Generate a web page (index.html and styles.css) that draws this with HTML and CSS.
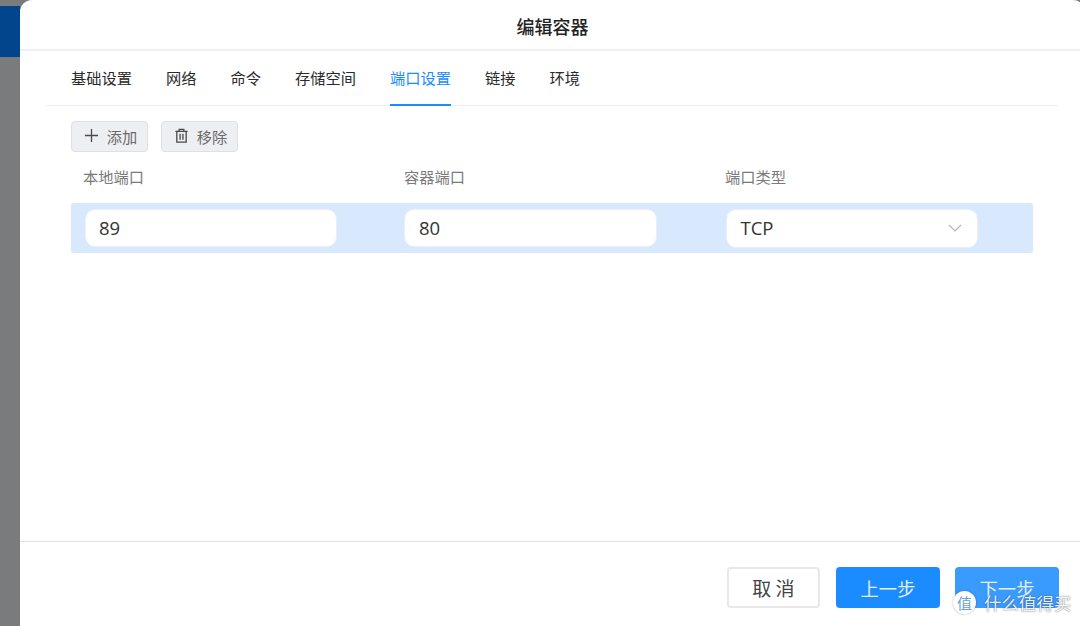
FILE: index.html
```html
<!DOCTYPE html>
<html lang="zh">
<head>
<meta charset="utf-8">
<title>编辑容器</title>
<link rel="stylesheet" href="styles.css">
</head>
<body>
<div class="page">
  <div class="backdrop"><div class="backdrop-bar"></div></div>
  <main class="dialog">
    <header class="dialog-title">编辑容器</header>
    <div class="dialog-body">
      <nav class="tabs">
        <span class="tab">基础设置</span>
        <span class="tab">网络</span>
        <span class="tab">命令</span>
        <span class="tab">存储空间</span>
        <span class="tab active">端口设置</span>
        <span class="tab">链接</span>
        <span class="tab">环境</span>
      </nav>
      <div class="toolbar">
        <button class="tool-btn">
          <svg class="icon" viewBox="0 0 16 16"><path d="M8 1v14M1 8h14"/></svg>
          <span class="tool-label">添加</span>
        </button>
        <button class="tool-btn">
          <svg class="icon" viewBox="0 0 16 16"><path d="M1.5 3.5h13M5.5 3.5V1.5h5v2M3 3.5V15h10V3.5M6.5 6v6.500M9.500 6v6.500"/></svg>
          <span class="tool-label">移除</span>
        </button>
      </div>
      <div class="grid head">
        <div class="col-label">本地端口</div>
        <div class="col-label">容器端口</div>
        <div class="col-label">端口类型</div>
      </div>
      <div class="grid row">
        <div class="field">89</div>
        <div class="field">80</div>
        <div class="field select">TCP
          <svg class="chevron" viewBox="0 0 14 8"><path d="M1 1l6 6 6-6"/></svg>
        </div>
      </div>
    </div>
    <footer class="dialog-footer">
      <button class="btn cancel">取 消</button>
      <button class="btn primary">上一步</button>
      <button class="btn primary next">下一步</button>
    </footer>
  </main>
  <div class="watermark">
    <span class="wm-badge">值</span>
    <span class="wm-text">什么值得买</span>
  </div>
</div>
</body>
</html>
```
FILE: styles.css
```css
* { box-sizing: border-box; }
html, body { margin: 0; height: 100%; overflow: hidden; }
body {
  font-family: "Noto Sans CJK SC", "Noto Sans", sans-serif;
  background: #7a7b7d;
}
.page {
  width: 1080px;
  height: 626px;
  display: flex;
  overflow: hidden;
  position: relative;
}
.backdrop {
  flex: 0 0 20px;
  padding-top: 6px;
  background: #7a7b7d;
}
.backdrop-bar {
  height: 51px;
  background: #03458c;
}
.dialog {
  flex: 0 0 1065px;
  height: 626px;
  background: #fff;
  border-radius: 12px 12px 0 0;
  display: flex;
  flex-direction: column;
}
.dialog-title {
  height: 51px;
  flex: none;
  border-bottom: 2px solid #f0f0f0;
  text-align: center;
  font-size: 18px;
  line-height: 52px;
  font-weight: 500;
  color: #222;
}
.dialog-body {
  flex: 1;
  padding: 0 26px;
}
.tabs {
  height: 55px;
  display: flex;
  gap: 34px;
  padding-left: 25px;
  border-bottom: 1px solid #f0f0f0;
}
.tab {
  height: 55px;
  line-height: 52px;
  font-size: 15.250px;
  color: #2a2a2a;
}
.tab.active {
  color: #1a8cff;
  border-bottom: 2px solid #1a8cff;
}
.toolbar {
  display: flex;
  gap: 13px;
  padding: 15px 0 0 25px;
}
.tool-btn {
  width: 77px;
  height: 31px;
  padding: 0 0 2px 2px;
  display: flex;
  align-items: center;
  justify-content: center;
  gap: 8px;
  background: #eeeff3;
  border: 1px solid #dfe0e4;
  border-radius: 4px;
  font: inherit;
  font-size: 15.250px;
  color: #6b6b6b;
}
.icon {
  width: 15px;
  height: 15px;
  fill: none;
  stroke: #4a4a4a;
  stroke-width: 1.400;
}
.tool-label { line-height: 20px; }
.grid {
  display: grid;
  width: 962px;
  margin-left: 25px;
}
.head {
  grid-template-columns: 253px 253px 252px;
  column-gap: 68px;
  height: 51px;
  padding-left: 12px;
}
.col-label {
  font-size: 15.250px;
  line-height: 48px;
  color: #7b7b7b;
}
.row {
  grid-template-columns: 252px 253px 254px;
  column-gap: 67px;
  height: 50px;
  padding: 6px 0 0 14px;
  background: #d8e9fd;
  border-radius: 3px;
}
.field {
  height: 38px;
  padding-left: 13px;
  background: #fff;
  border: 1px solid #ecf0f6;
  border-radius: 10px;
  font-family: "Open Sans", "Noto Sans", sans-serif;
  font-size: 18.500px;
  line-height: 36px;
  color: #333;
  display: flex;
  align-items: center;
  justify-content: space-between;
}
.field + .field { padding-left: 14px; }
.field.select {
  height: 39px;
  margin-left: 2px;
  padding: 0 15px 2px 13.500px;
}
.chevron {
  width: 14px;
  height: 8px;
  fill: none;
  stroke: #b5b5b5;
  stroke-width: 1.100;
}
.dialog-footer {
  height: 85px;
  flex: none;
  border-top: 1px solid #e2e2e2;
  display: flex;
  justify-content: flex-end;
  gap: 15px;
  padding: 25px 26px 0 0;
}
.btn {
  height: 41px;
  width: 104px;
  padding: 0;
  border: 0;
  border-radius: 4px;
  font: inherit;
  font-size: 18.300px;
  color: #fff;
}
.cancel {
  width: 93px;
  margin-right: 1px;
  background: #fff;
  border: 2px solid #e8e8e8;
  color: #444;
  font-size: 19px;
}
.primary {
  background: #1a8cff;
  color: #e4eefa;
}
.next { background: #3a9bff; }
.watermark {
  position: absolute;
  left: 953px;
  top: 591px;
  display: flex;
  align-items: center;
  gap: 8px;
  color: rgba(255, 255, 255, 0.920);
}
.wm-badge {
  width: 23px;
  height: 23px;
  border-radius: 50%;
  background: #fff;
  color: #6d9fd0;
  font-size: 15px;
  line-height: 23px;
  text-align: center;
  box-shadow: 0 0 2px rgba(0, 0, 0, 0.350);
}
.wm-text {
  font-size: 17.500px;
  line-height: 23px;
  white-space: nowrap;
  text-shadow: 0 0 1.500px rgba(40, 40, 40, 0.800);
}
```
